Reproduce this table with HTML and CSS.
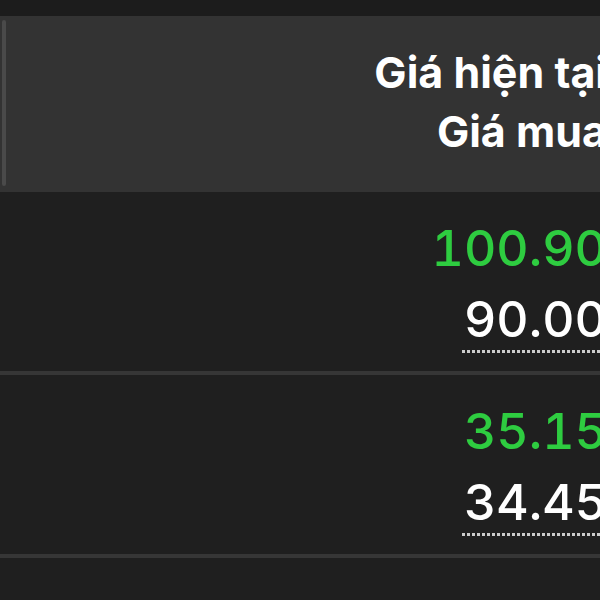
FILE: index.html
```html
<!DOCTYPE html>
<html lang="vi">
<head>
<meta charset="utf-8">
<link rel="stylesheet" href="styles.css">
</head>
<body>
<div class="table">
  <div class="top-band"></div>
  <div class="header">
    <div class="divider"></div>
    <div class="head-text">
      <div>Giá hiện tại</div>
      <div>Giá mua</div>
    </div>
  </div>
  <div class="row">
    <div class="price up">100.90</div>
    <div class="price cost"><span>90.00</span></div>
  </div>
  <div class="row">
    <div class="price up">35.15</div>
    <div class="price cost"><span>34.45</span></div>
  </div>
  <div class="row"></div>
</div>
</body>
</html>
```
FILE: styles.css
```css
html, body {
  margin: 0;
  padding: 0;
  background: #1f1f1f;
  overflow: hidden;
  width: 600px;
  height: 600px;
}
.table {
  width: 607px;
  font-family: Inter, "Noto Sans", sans-serif;
  color: #ffffff;
}
.top-band {
  height: 16px;
  background: #1c1c1c;
}
.header {
  height: 176px;
  background: #333333;
  display: flex;
  align-items: flex-start;
}
.divider {
  width: 4px;
  margin: 4px 0 6px 2px;
  align-self: stretch;
  background: #4a4a4a;
  border-radius: 2px;
}
.head-text {
  flex: 1;
  text-align: right;
  font-size: 43px;
  line-height: 59px;
  font-weight: 700;
  padding-top: 27px;
}
.row {
  display: flex;
  flex-direction: column;
  align-items: flex-end;
  padding: 28px 0 18px;
  border-bottom: 4px solid #363636;
}
.price {
  font-size: 50px;
  line-height: 56px;
  font-weight: 500;
  font-variant-numeric: tabular-nums;
}
.up {
  color: #2ecc40;
}
.cost {
  margin-top: 15px;
}
.cost span {
  display: block;
  padding: 0 0 6px 2px;
  background-image: linear-gradient(to right, #cccccc 60%, transparent 60%);
  background-size: 5px 3px;
  background-repeat: repeat-x;
  background-position: left bottom;
}
```
